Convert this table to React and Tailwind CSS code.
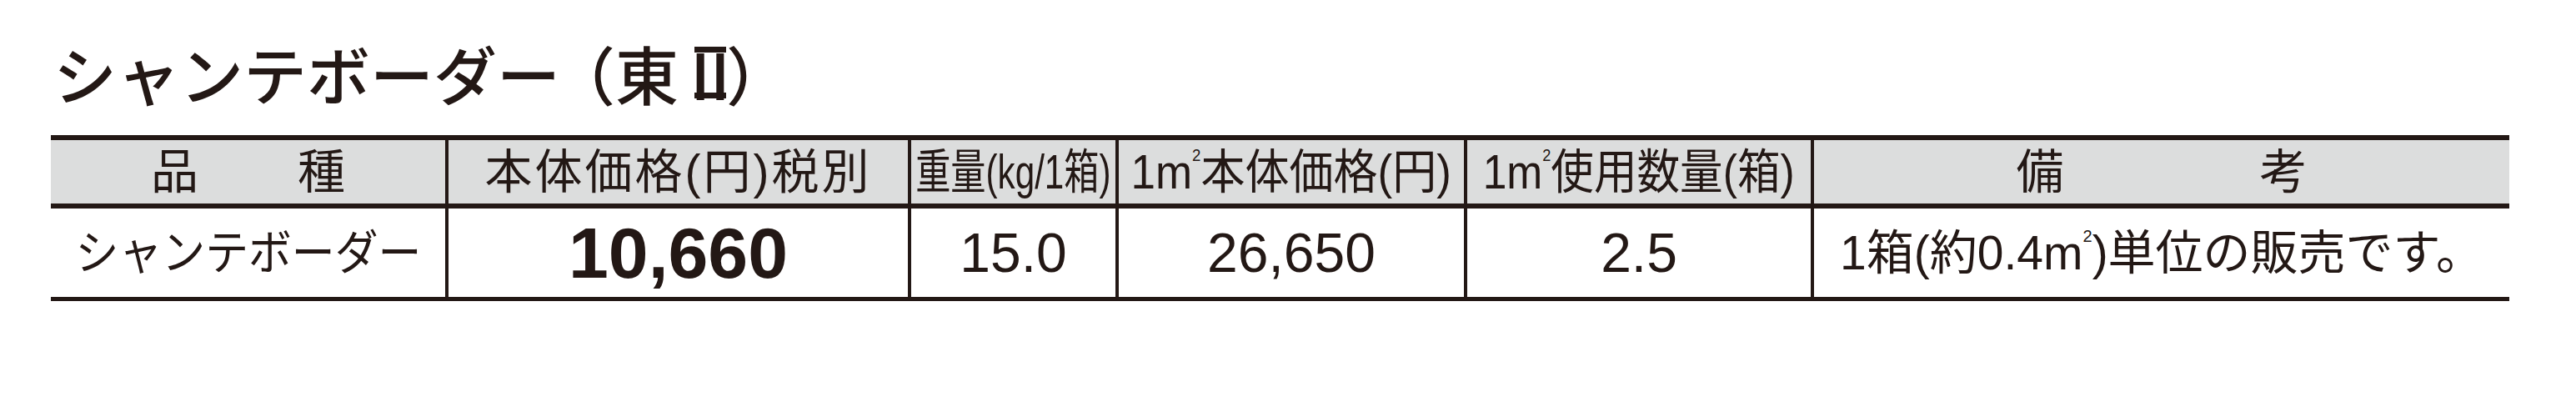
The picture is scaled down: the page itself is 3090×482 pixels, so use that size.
import React from "react";

const COLS = "grid grid-cols-[473px_555px_249px_418px_416px_838px]";

export default function App() {
  return (
    <div className="w-[3090px] h-[482px] bg-white text-[#231815] font-['Liberation_Sans','Noto_Sans_CJK_JP',sans-serif]">
      {/* タイトル */}
      <div className="pt-[49px] pl-[64px]">
        <h1 className="text-[76px] leading-none font-medium whitespace-nowrap font-['Noto_Sans_CJK_JP',sans-serif]">
          シャンテボーダ<span className="tracking-[-10px]">ー</span>（東
          <span className="ml-[19px] inline-flex h-[62px] w-[38px] items-center justify-center border-y-[7px] border-[#231815]">
            <span className="-mx-[19px]">Ⅱ</span>
          </span>
          ）
        </h1>
      </div>

      {/* 表 */}
      <div className="ml-[61px] mt-[37px] w-[2949px] border-t-[6px] border-b-[5px] border-[#231815]">
        {/* ヘッダー */}
        <div className={`${COLS} h-[82px] bg-[#dcdddd] border-b-[6px] border-[#231815] text-[57px] leading-none`}>
          <div className="flex items-center justify-center gap-[119px]">
            <span>品</span>
            <span>種</span>
          </div>
          <div className="flex items-center justify-center border-l-4 border-[#231815]">
            <span className="whitespace-nowrap tracking-[3px]">本体価格(円)税別</span>
          </div>
          <div className="flex items-center justify-center border-l-4 border-[#231815]">
            <span className="inline-block shrink-0 whitespace-nowrap scale-x-[0.74]">重量(kg/1箱)</span>
          </div>
          <div className="flex items-center justify-center border-l-4 border-[#231815]">
            <span className="inline-block shrink-0 whitespace-nowrap scale-x-[0.93]">
              1m<sup className="text-[20px] top-[-33px]">2</sup>本体価格(円)
            </span>
          </div>
          <div className="flex items-center justify-center border-l-4 border-[#231815]">
            <span className="inline-block shrink-0 whitespace-nowrap scale-x-[0.905]">
              1m<sup className="text-[20px] top-[-33px]">2</sup>使用数量(箱)
            </span>
          </div>
          <div className="flex items-center justify-center gap-[235px] border-l-4 border-[#231815]">
            <span>備</span>
            <span>考</span>
          </div>
        </div>

        {/* データ行 */}
        <div className={`${COLS} h-[106px] leading-none`}>
          <div className="flex items-center justify-center text-[57px]">
            <span className="inline-block shrink-0 whitespace-nowrap scale-x-[0.91]">シャンテボーダー</span>
          </div>
          <div className="flex items-center justify-center border-l-4 border-[#231815] text-[86px] font-bold">
            10,660
          </div>
          <div className="flex items-center justify-center border-l-4 border-[#231815] text-[66px]">
            15.0
          </div>
          <div className="flex items-center justify-center border-l-4 border-[#231815] text-[66px]">
            26,650
          </div>
          <div className="flex items-center justify-center border-l-4 border-[#231815] text-[66px]">
            2.5
          </div>
          <div className="flex items-center justify-center border-l-4 border-[#231815] text-[57px]">
            <span className="whitespace-nowrap">
              1箱(約0.4m<sup className="text-[20px] top-[-33px]">2</sup>)単位の販売です。
            </span>
          </div>
        </div>
      </div>
    </div>
  );
}
